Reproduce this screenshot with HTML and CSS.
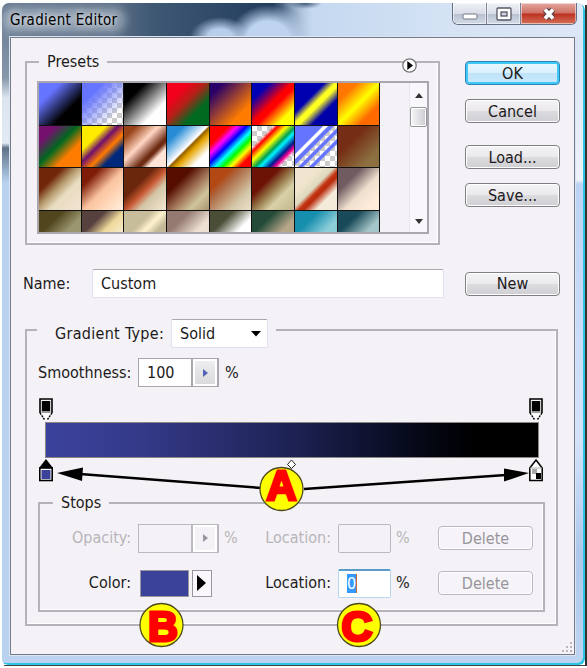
FILE: index.html
```
<!DOCTYPE html>
<html lang="en">
<head>
    <meta charset="UTF-8">
    <meta name="viewport" content="width=device-width, initial-scale=1.0">
    <title>Gradient Editor</title>
    <link rel="stylesheet" href="styles.css">
</head>
<body>
    <div class="window">
        <header class="titlebar">
            <h1>Gradient Editor</h1>
            <div class="window-buttons">
                <span class="minimize"><svg width="16" height="7"><rect x="1" y="1" width="14" height="5" rx="1" fill="#fff" stroke="#777985"/></svg></span>
                <span class="maximize"><svg width="16" height="14"><rect x="1" y="1" width="14" height="12" rx="1" fill="#fff" stroke="#555763" stroke-width="1.3"/><rect x="5" y="5" width="6" height="4" fill="#ccd3e2" stroke="#555763" stroke-width="1.3"/></svg></span>
                <span class="close"><svg width="16" height="14"><path d="M4 2.500 L12 11.500 M12 2.500 L4 11.500" stroke="#5b4249" stroke-width="6"/><path d="M4 2.500 L12 11.500 M12 2.500 L4 11.500" stroke="#fff" stroke-width="3.6"/></svg></span>
            </div>
        </header>

        <main class="client">
            <section class="top">
                <fieldset class="presets">
                    <legend>Presets</legend>
                    <span class="menu-button"><svg width="15" height="15"><circle cx="7.5" cy="7.5" r="6.7" fill="#fff" stroke="#77757b" stroke-width="1.3"/><path d="M5.3 3 L11 7.5 L5.3 12Z"/></svg></span>
                    <div class="preset-list">
                        <div class="swatches">
                            <i class="s1"></i><i class="s2"></i><i class="s3"></i><i class="s4"></i><i class="s5"></i><i class="s6"></i><i class="s7"></i><i class="s8"></i>
                            <i class="s9"></i><i class="s10"></i><i class="s11"></i><i class="s12"></i><i class="s13"></i><i class="s14"></i><i class="s15"></i><i class="s16"></i>
                            <i class="s17"></i><i class="s18"></i><i class="s19"></i><i class="s20"></i><i class="s21"></i><i class="s22"></i><i class="s23"></i><i class="s24"></i>
                            <i class="s25"></i><i class="s26"></i><i class="s27"></i><i class="s28"></i><i class="s29"></i><i class="s30"></i><i class="s31"></i><i class="s32"></i>
                        </div>
                        <div class="scrollbar">
                            <svg width="8" height="5"><path d="M4 0 L8 5 H0Z" fill="#333"/></svg>
                            <span class="thumb"></span>
                            <svg class="down" width="8" height="5"><path d="M0 0 H8 L4 5Z" fill="#333"/></svg>
                        </div>
                    </div>
                </fieldset>
                <div class="actions">
                    <button class="btn btn-ok">OK</button>
                    <button class="btn">Cancel</button>
                    <button class="btn btn-load">Load...</button>
                    <button class="btn">Save...</button>
                </div>
            </section>

            <section class="name-row">
                <label>Name:</label>
                <div class="field name-field">Custom</div>
                <button class="btn">New</button>
            </section>

            <fieldset class="gradient">
                <legend>
                    <span class="type-label">Gradient Type:</span>
                    <span class="field select">Solid <svg width="10" height="6"><path d="M0 0 H10 L5 5.5Z"/></svg></span>
                </legend>
                <div class="smoothness">
                    <label>Smoothness:</label>
                    <div class="spinner"><b>100</b><i><svg width="5" height="8"><path d="M0 0 L5 4 L0 8Z" fill="#5262b5"/></svg></i></div>
                    <span>%</span>
                </div>

                <div class="ramp">
                    <div class="markers">
                        <svg width="16" height="23"><path d="M1 1 H15 V15 L10 22 H6 L1 15Z" fill="#fff"/><path d="M2 15 V1 H14 V15" fill="#f6f4f8" stroke="#000" stroke-width="1.6"/><path d="M2 15 L6.5 21.5 M14 15 L9.5 21.5" fill="none" stroke="#000" stroke-width="1.4" stroke-dasharray="2 1"/><rect x="3.5" y="3" width="9" height="12" fill="#999"/><rect x="4" y="3" width="8" height="10"/></svg>
                        <svg width="16" height="23"><path d="M1 1 H15 V15 L10 22 H6 L1 15Z" fill="#fff"/><path d="M2 15 V1 H14 V15" fill="#f6f4f8" stroke="#000" stroke-width="1.6"/><path d="M2 15 L6.5 21.5 M14 15 L9.5 21.5" fill="none" stroke="#000" stroke-width="1.4" stroke-dasharray="2 1"/><rect x="3.5" y="3" width="9" height="12" fill="#999"/><rect x="4" y="3" width="8" height="10"/></svg>
                    </div>
                    <div class="bar"></div>
                    <div class="markers">
                        <svg width="16" height="23"><path d="M8 0 L15 9 H1Z"/><rect x="1.8" y="9" width="12.4" height="12.5" fill="#fff" stroke="#000" stroke-width="1.6"/><rect x="3.500" y="11" width="9" height="9" fill="#3b429a"/></svg>
                        <svg class="midpoint" width="11" height="11"><path d="M5.5 1 L9.5 5.5 L5.5 9.5 L1.5 5.5Z" fill="#fff" stroke="#222"/></svg>
                        <svg width="16" height="23"><path d="M8 1 L14.2 9 V21.5 H1.8 V9Z" fill="#fff" stroke="#000" stroke-width="1.5"/><path d="M2 9 H14" stroke="#aaa"/><rect x="4" y="10" width="5" height="5" fill="#aaa"/><rect x="8" y="14" width="5" height="6"/></svg>
                    </div>
                </div>

                <fieldset class="stops">
                    <legend>Stops</legend>
                    <div class="stop-row disabled">
                        <label>Opacity:</label>
                        <div class="spinner"><b></b><i><svg width="5" height="8"><path d="M0 0 L5 4 L0 8Z" fill="#99979d"/></svg></i></div>
                        <span>%</span>
                        <label>Location:</label>
                        <div class="field"></div>
                        <span>%</span>
                        <button class="btn" disabled>Delete</button>
                    </div>
                    <div class="stop-row">
                        <label>Color:</label>
                        <div class="color-picker"><i class="color"></i><i class="color-menu"><svg width="9" height="16"><path d="M0 0 L9 8 L0 16Z"/></svg></i></div>
                        <span></span>
                        <label>Location:</label>
                        <div class="field focused"><mark>0</mark></div>
                        <span>%</span>
                        <button class="btn" disabled>Delete</button>
                    </div>
                </fieldset>
            </fieldset>
        </main>

        <!-- callouts over the dialog -->
        <svg class="callouts" width="587" height="668">
            <path d="M262 488 L80 474 M304 489 L506 475" stroke="#000" stroke-width="2.5"/>
            <path d="M57 473 L83 467.5 L82 481Z M529 473 L504 468.5 L504 481.5Z"/>
            <g class="callout"><circle cx="281.5" cy="489" r="21.5"/><text x="281.5" y="499.500" textLength="30" lengthAdjust="spacingAndGlyphs">A</text></g>
            <g class="callout"><circle cx="161.500" cy="625" r="21.5"/><text x="163" y="640.500" textLength="30" lengthAdjust="spacingAndGlyphs">B</text></g>
            <g class="callout"><circle cx="359" cy="625" r="21.5"/><text x="357" y="640.500" textLength="31" lengthAdjust="spacingAndGlyphs">C</text></g>
        </svg>
        <svg class="grip" width="12" height="12" fill="#b9b7bd"><path d="M9 1h2v2h-2z M9 5h2v2h-2z M9 9h2v2h-2z M5 5h2v2h-2z M5 9h2v2h-2z M1 9h2v2h-2z"/></svg>
    </div>
</body>
</html>
```
FILE: styles.css
```
* {
    box-sizing: border-box;
}
body {
    margin: 0;
    width: 587px;
    height: 668px;
    padding: 3px 0 0 2px;
    overflow: hidden;
    font: 16px/20px "DejaVu Sans Condensed", "DejaVu Sans", sans-serif;
    font-stretch: condensed;
    color: #1c1a20;
    background: linear-gradient(#333, #333) 585px 5px / 2px 661px no-repeat,
        linear-gradient(#444, #444) 4px 665px / 583px 1px no-repeat, #fff;
}
svg {
    display: block;
    flex: none;
}
.window {
    width: 583px;
    height: 662px;
    padding: 0 9px 9px 7px;
    border-radius: 7px 7px 6px 6px;
    box-shadow: inset -2px -2px 0 #2bc6e4;
    background:
        linear-gradient(#fff0 140px, #5e7188 145px, #b8d2f0 180px) 0 0 / 8px 100% no-repeat,
        linear-gradient(#64788f, #7c8da2 50px, #8798ab 75px, #dce5ef 95px, #e3eaf4 100%) 0 0 / 8px 145px no-repeat,
        linear-gradient(#d8e4f5, #eef3fc 143px, #bcd3f3 147px, #d4e3fa 400px, #adc8ea 520px, #c5d9f3) 100% 34px / 9px 100% no-repeat,
        radial-gradient(ellipse 30px 20px at 218px 34px, #b8cfeb 40%, #b8cfeb00) 0 0 / 100% 34px no-repeat,
        radial-gradient(ellipse 40px 36px at 266px 38px, #bed4ef 55%, #bed4ef00) 0 0 / 100% 34px no-repeat,
        radial-gradient(ellipse 17px 6px at 303px 0, #3c5674, #3c567400) 0 0 / 100% 34px no-repeat,
        linear-gradient(90deg, #c4d8f000 270px, #c4d8f0 310px, #d5e3f4 450px, #dce7f7) 0 0 / 100% 34px no-repeat,
        linear-gradient(90deg, #687b92, #5d7087 110px, #3f5874 150px, #203a5b 280px, #c4d8f0 320px) 0 0 / 100% 34px no-repeat,
        #bdd3ef;
}
.titlebar {
    display: flex;
    justify-content: space-between;
    height: 33px;
}
.titlebar h1 {
    margin: 6px 0 0 -6px;
    padding: 0 7px;
    height: 22px;
    font-size: 15px;
    font-weight: normal;
    line-height: 22px;
    letter-spacing: 0.3px;
    border-radius: 10px;
    background: #b7c2d066;
    box-shadow: 0 0 7px 3px #b7c2d066;
    text-shadow: 0 0 6px #fff, 0 0 8px #fff;
    color: #000;
}
.window-buttons {
    display: flex;
    width: 125px;
    height: 22px;
    margin-right: -1px;
    border: 1px solid #686f82;
    border-top: 0;
    border-radius: 0 0 6px 6px;
    overflow: hidden;
}
.window-buttons span {
    width: 34px;
    display: flex;
    align-items: center;
    justify-content: center;
    border-right: 1px solid #7b8296;
    box-shadow: inset 0 0 0 1px #fff8;
    background: linear-gradient(#eff1f6, #d9dde7 50%, #b7c0d0 52%, #d5dce8);
}
.window-buttons .minimize {
    padding-top: 6px;
}
.window-buttons .close {
    flex: 1;
    border: 0;
    background: linear-gradient(#e3a89f, #cf7065 48%, #bb3020 52%, #d57158);
}
.client {
    height: 620px;
    padding: 14px 14px 0 14px;
    border: 2px solid #737b8c;
    outline: 1px solid #dce5f0;
    outline-offset: -1px;
    background: #f4f2f6;
}
fieldset {
    margin: 0;
    min-width: 0;
    border: 2px solid #b5b3b9;
    box-shadow: inset -1px -1px 0 #fff;
}
legend {
    padding: 0 8px;
}

/* presets and dialog buttons */
.top {
    display: flex;
    justify-content: space-between;
}
.presets {
    position: relative;
    width: 415px;
    height: 193px;
    padding: 9px 0 0 10px;
}
.presets legend {
    margin-left: 2px;
}
.menu-button {
    position: absolute;
    top: -14px;
    left: 375px;
}
.preset-list {
    display: flex;
    justify-content: space-between;
    width: 392px;
    height: 153px;
    border: 2px solid #a9a7ad;
}
.swatches {
    display: grid;
    grid-template-columns: repeat(8, 42.67px);
    grid-auto-rows: 42.67px;
    height: 149px;
    overflow: hidden;
}
.swatches i {
    border: solid #111;
    border-width: 0 1.5px 1.5px 0;
}
.s1 { background: linear-gradient(135deg, #6675ff 25%, #000 68%); }
.s2 { background: linear-gradient(135deg, #6675ff 25%, #6675ff00 80%), repeating-conic-gradient(#ccc 0 25%, #fff 0 50%) 0 0 / 10px 10px; }
.s3 { background: linear-gradient(135deg, #000 25%, #fff 72%); }
.s4 { background: linear-gradient(135deg, #f3001a 25%, #b42018 45%, #006b20 70%); }
.s5 { background: linear-gradient(135deg, #29006a 15%, #ff7c00 75%); }
.s6 { background: linear-gradient(135deg, #0000b5 20%, #f00 48%, #f00 55%, #ff0 80%); }
.s7 { background: linear-gradient(135deg, #0000b0 35%, #ff2 48%, #ff2 54%, #0000a8 70%); }
.s8 { background: linear-gradient(135deg, #ff7600 22%, #ff0 50%, #ff6b00 76%); }
.s9 { background: linear-gradient(135deg, #75106f 20%, #00691f 46%, #ff7c00 70%); }
.s10 { background: linear-gradient(135deg, #ffeb00 29%, #70106f 44%, #ff7c00 60%, #00287a 75%); }
.s11 { background: linear-gradient(135deg, #994418 15%, #ffd7c4 42%, #6e2c13 65%, #6e2c13 69%, #ffe3d6 78%); }
.s12 { background: linear-gradient(135deg, #278bd6 20%, #fff 49%, #926000 52%, #e6a400 60%, #fff 80%); }
.s13 { background: linear-gradient(135deg, #f00 23%, #f0f 34%, #00f 45%, #0ff 56%, #0f0 65%, #ff0 75%, #f00 86%); }
.s14 { background: linear-gradient(135deg, #fff0 25%, #f00 31%, #ff0 42%, #00a451 53%, #00f3ff 59%, #001a91 70%, #f3008e 77%, #fff0 83%), repeating-conic-gradient(#ccc 0 25%, #fff 0 50%) 0 0 / 10px 10px; }
.s15 { background: linear-gradient(135deg, #6675ff 33%, #fff 35% 39%, #6675ff 41% 46%, #fff0 48% 52%, #6675ff 54% 58%, #fff0 60% 65%, #6675ff 67% 71%, #fff0 73%), repeating-conic-gradient(#ccc 0 25%, #fff 0 50%) 0 0 / 10px 10px; }
.s16 { background: linear-gradient(135deg, #752e15 35%, #8c7040 80%); }
.s17 { background: linear-gradient(135deg, #702707 28%, #b49a6d 46%, #e8dcc0 62%, #f3e3d2); }
.s18 { background: linear-gradient(135deg, #7e1c08 22%, #fac39f 52%, #ffd4b4 70%, #fff0df); }
.s19 { background: linear-gradient(135deg, #6b270b 36%, #c85732 52%, #d4c5a5 67%, #f3e9d4); }
.s20 { background: linear-gradient(135deg, #550d00 30%, #a77c5c 57%, #cfc49b 76%, #aa9470); }
.s21 { background: linear-gradient(135deg, #b24915 27%, #ae6c47 40%, #d5c8a9 75%, #eee0c8); }
.s22 { background: linear-gradient(135deg, #6d1306 33%, #937444 50%, #d8d1a7 69%, #c2b68d); }
.s23 { background: linear-gradient(135deg, #f0e5cf 30%, #ded8bc 46%, #c23716 54%, #b92b0d 60%, #f4ebda 75%); }
.s24 { background: linear-gradient(135deg, #705b60 28%, #eee0cf 58%, #ffecda 85%); }
.s25 { background: linear-gradient(135deg, #50451d 28%, #9b966f 58%); }
.s26 { background: linear-gradient(135deg, #57413e 28%, #efd99b 51%, #fff); }
.s27 { background: linear-gradient(135deg, #c8bd9b 34%, #fff3d0 48%, #c3b999 63%); }
.s28 { background: linear-gradient(135deg, #947a71 27%, #eee1d4 60%); }
.s29 { background: linear-gradient(135deg, #4b4e37 28%, #fff 58%); }
.s30 { background: linear-gradient(135deg, #244b39 28%, #b7a789 60%); }
.s31 { background: linear-gradient(135deg, #168eae 28%, #8ccdd8 60%); }
.s32 { background: linear-gradient(135deg, #194a59 27%, #a6c7ca 60%); }
.scrollbar {
    display: flex;
    flex-direction: column;
    align-items: center;
    width: 18px;
    padding: 10px 0 8px;
    border-left: 1px solid #e9e7ed;
    background: #f9f7fb;
}
.thumb {
    width: 17px;
    height: 20px;
    margin-top: 9px;
    border: 1px solid #98969d;
    border-radius: 2px;
    box-shadow: inset 0 0 0 1px #fff;
    background: linear-gradient(90deg, #f7f7f9, #dedee2 60%, #c9c9d0);
}
.scrollbar .down {
    margin-top: auto;
}
.actions {
    display: flex;
    flex-direction: column;
    gap: 14px;
    padding-top: 9px;
}
.btn {
    width: 95px;
    height: 24px;
    padding: 1px 0 0;
    font: inherit;
    line-height: 20px;
    color: inherit;
    border: 1px solid #807e84;
    border-radius: 4px;
    box-shadow: inset 0 0 0 1px #fff;
    background: linear-gradient(#f4f3f5, #ebe9ec 48%, #dcdbdf 52%, #cfced2);
}
.btn-ok {
    border-color: #2c83b5;
    box-shadow: inset 0 0 0 2px #3fc7f5;
    background: linear-gradient(#eaf8ff, #d9f0fc 48%, #bfe3f8 52%, #c9eaff);
}
.btn-load {
    margin-top: 8px;
}
.btn:disabled {
    color: #97959b;
    border-color: #bbb9c0;
    background: #f6f4f8;
}

/* name */
.name-row {
    display: flex;
    align-items: center;
    margin-top: 24px;
    height: 29px;
}
.name-row label {
    width: 69px;
    margin-left: -2px;
}
.name-row .btn {
    margin-left: auto;
}
.field {
    display: flex;
    align-items: center;
    height: 29px;
    padding: 0 8px;
    border: 1px solid #e0e0ef;
    border-top-color: #a9a8b0;
    border-radius: 2px;
    background: #fff;
}
.name-field {
    width: 352px;
}

/* gradient settings */
.gradient {
    width: 533px;
    height: 315px;
    margin-top: 13px;
    padding: 10px 0 0 11px;
}
.gradient > legend {
    display: flex;
    align-items: center;
    gap: 6px;
    height: 37px;
    margin-left: -1px;
    padding: 8px 8px 0 18px;
}
.type-label {
    width: 110px;
    letter-spacing: 0.3px;
    white-space: nowrap;
}
.select {
    width: 97px;
    justify-content: space-between;
    padding-right: 6px;
}
.smoothness {
    display: flex;
    align-items: center;
    gap: 6px;
    height: 29px;
}
.smoothness label {
    width: 94px;
}
.spinner {
    display: flex;
    width: 81px;
    height: 29px;
    border: 1px solid #a9a7ae;
    background: #fff;
}
.spinner b {
    flex: 1;
    padding-left: 8px;
    font-weight: normal;
    line-height: 27px;
}
.spinner i {
    display: flex;
    align-items: center;
    justify-content: center;
    width: 27px;
    border: 1px solid #a9a7ae;
    border-width: 0 1px 0 2px;
    box-shadow: inset 0 0 0 2px #fff;
    background: linear-gradient(#f0eff2, #d8d7da);
}
.ramp {
    width: 506px;
    margin: 11px 0 0;
}
.markers {
    display: flex;
    justify-content: space-between;
    height: 24px;
}
.bar {
    width: 494px;
    height: 36px;
    margin: 0 0 1px 7px;
    border: 1px solid #8b8782;
    background: linear-gradient(90deg, #3b429c, #343988 20%, #1d2254 50%, #060919 75%, #000 87%);
}

/* stops */
.stops {
    width: 507px;
    height: 119px;
    margin-top: 10px;
    padding: 10px 0 0;
}
.stops legend {
    margin-left: 13px;
}
.stop-row {
    display: grid;
    grid-template-columns: 91px 81px 23px 96px 53px 24px 95px;
    align-items: center;
    justify-content: start;
    height: 30px;
    margin-bottom: 15px;
}
.stop-row label {
    text-align: right;
}
.stop-row .spinner,
.stop-row .field {
    margin-left: 7px;
    margin-right: -7px;
}
.stop-row span {
    margin-left: 12px;
}
.stop-row .btn {
    margin-left: 30px;
}
.disabled {
    color: #b7b5bb;
}
.disabled .spinner,
.disabled .field,
.disabled .spinner i {
    border-color: #bbb9c0;
    background: #f4f2f6;
}
.focused {
    border-color: #b5d6ee;
    border-top: 2px solid #5a9bcd;
}
mark {
    padding: 0;
    line-height: 19px;
    color: #fff;
    background: #3399ff;
    border-right: 1px solid #c76b2c;
}
.color-picker {
    display: flex;
    gap: 3px;
    margin-left: 9px;
}
.color-picker i {
    height: 27px;
    border: 1px solid #99979d;
}
.color {
    width: 50px;
    background: #3b429a;
}
.color-menu {
    display: flex;
    align-items: center;
    justify-content: center;
    width: 21px;
    background: #faf8fc;
}

.callouts {
    position: absolute;
    top: 0;
    left: 0;
}
.callout circle {
    fill: #ff0;
    stroke: #4d4a1c;
    stroke-width: 1.3;
}
.callout text {
    font: bold 42px "Liberation Sans", Arial, sans-serif;
    text-anchor: middle;
    fill: #f00;
    stroke: #f00;
    stroke-width: 3;
}
.grip {
    position: absolute;
    left: 561px;
    top: 641px;
}
```
